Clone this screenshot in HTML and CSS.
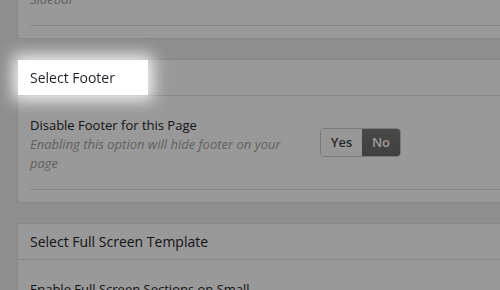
FILE: index.html
```html
<!DOCTYPE html>
<html>
<head>
<meta charset="utf-8">
<link rel="stylesheet" href="styles.css">
</head>
<body>
<div class="page">
  <section class="panel first">
    <div class="panel-head"><span class="title">Select Sidebar</span></div>
    <div class="panel-body">
      <div class="row">
        <div class="info">
          <div class="label">Page Sidebar</div>
          <div class="desc">Sidebar</div>
        </div>
      </div>
    </div>
  </section>

  <section class="panel">
    <div class="panel-head">
      <div class="spot"><span class="title">Select Footer</span></div>
    </div>
    <div class="panel-body">
      <div class="row">
        <div class="info">
          <div class="label">Disable Footer for this Page</div>
          <div class="desc">Enabling this option will hide footer on your page</div>
        </div>
        <div class="toggle">
          <span class="opt yes">Yes</span>
          <span class="opt no">No</span>
        </div>
      </div>
    </div>
  </section>

  <section class="panel">
    <div class="panel-head"><span class="title">Select Full Screen Template</span></div>
    <div class="panel-body">
      <div class="row">
        <div class="info">
          <div class="label">Enable Full Screen Sections on Small Screens</div>
          <div class="desc">Enabling this option will display full screen sections on small devices</div>
        </div>
      </div>
    </div>
  </section>
</div>
<div class="overlay"></div>
</body>
</html>
```

FILE: styles.css
```css
html, body {
  margin: 0;
  padding: 0;
  overflow: hidden;
  height: 290px;
  background: #ededed;
  font-family: "Open Sans", "Liberation Sans", sans-serif;
  color: #1e2329;
}

.page {
  padding-left: 17px;
  margin-top: -86px;
  width: 700px;
}

.panel {
  background: #fff;
  border: 1px solid #e1e1e1;
  margin-bottom: 20px;
}

.panel-head {
  height: 35px;
  display: flex;
  align-items: stretch;
  border-bottom: 1px solid #e5e5e5;
}

.title {
  font-size: 14px;
  line-height: 35px;
  padding-left: 12px;
}

.spot {
  position: relative;
  z-index: 101;
  width: 130px;
  background: #fff;
  display: flex;
  box-shadow: 0 0 16px 5px rgba(255, 255, 255, 0.9);
}

.panel-body {
  padding: 20px 12px 12px;
}

.row {
  display: flex;
  align-items: flex-start;
  gap: 20px;
  padding-bottom: 16px;
  border-bottom: 1px solid #e5e5e5;
}

.info {
  width: 270px;
  flex: 0 0 270px;
}

.label {
  font-size: 13px;
  line-height: 19px;
}

.desc {
  font-size: 13px;
  line-height: 19px;
  font-style: italic;
  color: #a3a3a3;
}

.toggle {
  margin-top: 12px;
  display: flex;
  height: 29px;
  border: 1px solid #cccccc;
  border-radius: 4px;
  overflow: hidden;
  box-sizing: border-box;
}

.opt {
  font-size: 13px;
  font-weight: 600;
  line-height: 27px;
  text-align: center;
}

.yes {
  width: 41px;
  background: #fcfcfc;
  color: #444;
}

.no {
  width: 38px;
  background: linear-gradient(#7a7a7a, #6a6a6a);
  color: #fff;
}

.overlay {
  position: fixed;
  inset: 0;
  background: rgba(0, 0, 0, 0.4);
  z-index: 100;
}
```
